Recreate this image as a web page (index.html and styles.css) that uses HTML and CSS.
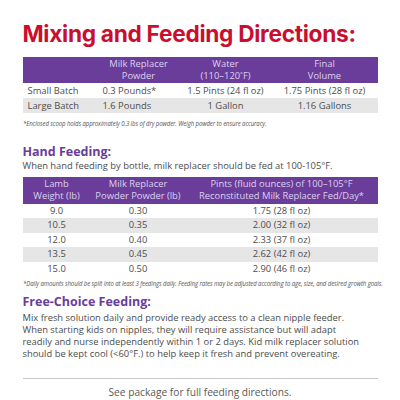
FILE: index.html
```html
<!DOCTYPE html>
<html lang="en">
<head>
    <meta charset="UTF-8">
    <meta name="viewport" content="width=device-width, initial-scale=1.0">
    <title>Mixing and Feeding Directions</title>
    <link rel="stylesheet" href="styles.css">
</head>
<body>
    <div class="page">
        <h1>Mixing and Feeding Directions:</h1>

        <table class="batch">
            <thead>
                <tr>
                    <th></th>
                    <th>Milk Replacer<br>Powder</th>
                    <th>Water<br>(110–120˚F)</th>
                    <th>Final<br>Volume</th>
                </tr>
            </thead>
            <tbody>
                <tr>
                    <td class="left">Small Batch</td>
                    <td class="left">0.3 Pounds*</td>
                    <td>1.5 Pints (24 fl oz)</td>
                    <td>1.75 Pints (28 fl oz)</td>
                </tr>
                <tr class="alt">
                    <td class="left">Large Batch</td>
                    <td class="left">1.6 Pounds</td>
                    <td>1 Gallon</td>
                    <td>1.16 Gallons</td>
                </tr>
            </tbody>
        </table>
        <p class="note first">*Enclosed scoop holds approximately 0.3 lbs of dry powder. Weigh powder to ensure accuracy.</p>

        <h2 class="hand">Hand Feeding:</h2>
        <p class="text intro">When hand feeding by bottle, milk replacer should be fed at 100-105°F.</p>

        <table class="lamb">
            <thead>
                <tr>
                    <th>Lamb<br>Weight (lb)</th>
                    <th>Milk Replacer<br>Powder Powder (lb)</th>
                    <th>Pints (fluid ounces) of 100–105°F<br>Reconstituted Milk Replacer Fed/Day*</th>
                </tr>
            </thead>
            <tbody>
                <tr><td>9.0</td><td>0.30</td><td>1.75 (28 fl oz)</td></tr>
                <tr class="alt"><td>10.5</td><td>0.35</td><td>2.00 (32 fl oz)</td></tr>
                <tr><td>12.0</td><td>0.40</td><td>2.33 (37 fl oz)</td></tr>
                <tr class="alt"><td>13.5</td><td>0.45</td><td>2.62 (42 fl oz)</td></tr>
                <tr><td>15.0</td><td>0.50</td><td>2.90 (46 fl oz)</td></tr>
            </tbody>
        </table>
        <p class="note second">*Daily amounts should be split into at least 3 feedings daily. Feeding rates may be adjusted according to age, size, and desired growth goals.</p>

        <h2 class="free">Free-Choice Feeding:</h2>
        <p class="text para">Mix fresh solution daily and provide ready access to a clean nipple feeder.<br>
            When starting kids on nipples, they will require assistance but will adapt<br>
            readily and nurse independently within 1 or 2 days. Kid milk replacer solution<br>
            should be kept cool (&lt;60°F.) to help keep it fresh and prevent overeating.</p>

        <p class="footer">See package for full feeding directions.</p>
    </div>
</body>
</html>
```

FILE: styles.css
```css
body {
    margin: 0;
    background: #fff;
    font-family: "Open Sans", Arial, sans-serif;
    color: #4d4d4d;
}
.page {
    width: 355px;
    margin: 0 auto;
    padding: 21px 0 0 0;
}
h1 {
    margin: 0 0 10px 0;
    font-family: Inter, "Liberation Sans", sans-serif;
    font-size: 22.7px;
    font-weight: 700;
    letter-spacing: -0.3px;
    color: #c8102e;
    line-height: 26px;
    white-space: nowrap;
}
h2 {
    margin: 0;
    font-size: 12.5px;
    font-weight: 700;
    color: #6a3d9a;
    line-height: 15px;
}
h2.hand { margin-top: 15.5px; }
h2.free { margin-top: 6.5px; }

table {
    width: 100%;
    border-collapse: collapse;
    font-size: 9.4px;
}
th {
    background: #6a3d9a;
    color: #ddd0ef;
    font-weight: 400;
    line-height: 12px;
    padding: 1px 0;
    text-align: center;
    white-space: nowrap;
}
td {
    text-align: center;
    line-height: 13px;
    padding: 1px 0;
    white-space: nowrap;
}
tr.alt td {
    background: #e6e6e6;
}
.batch td.left {
    text-align: left;
    padding-left: 5px;
}
.batch th:nth-child(1) { width: 75px; }
.batch th:nth-child(2) { width: 82px; }
.batch th:nth-child(3) { width: 92px; }

.lamb {
    margin-top: 4.5px;
}
.lamb th {
    padding: 1.5px 0;
}
.lamb td {
    line-height: 12.5px;
}
.lamb th:nth-child(1) { width: 68px; }
.lamb th:nth-child(2) { width: 95px; }

.note {
    margin: 0;
    font-size: 7px;
    font-style: italic;
    letter-spacing: -0.1px;
    line-height: 8px;
    color: #555;
    white-space: nowrap;
    transform: scaleX(0.86);
    transform-origin: left center;
}
.note.first { margin-top: 7px; }
.note.second { margin-top: 3.5px; }

.text {
    margin: 0;
    font-size: 9.4px;
    line-height: 12px;
    white-space: nowrap;
}
.text.intro {
    margin-top: 1.5px;
}
.text.para {
    margin-top: 2.5px;
}
.footer {
    margin: 18px 0 0 0;
    border-top: 1px solid #c8c8c8;
    padding-top: 6px;
    text-align: center;
    font-size: 10.2px;
    font-weight: 500;
    line-height: 14px;
    color: #595959;
}
```
